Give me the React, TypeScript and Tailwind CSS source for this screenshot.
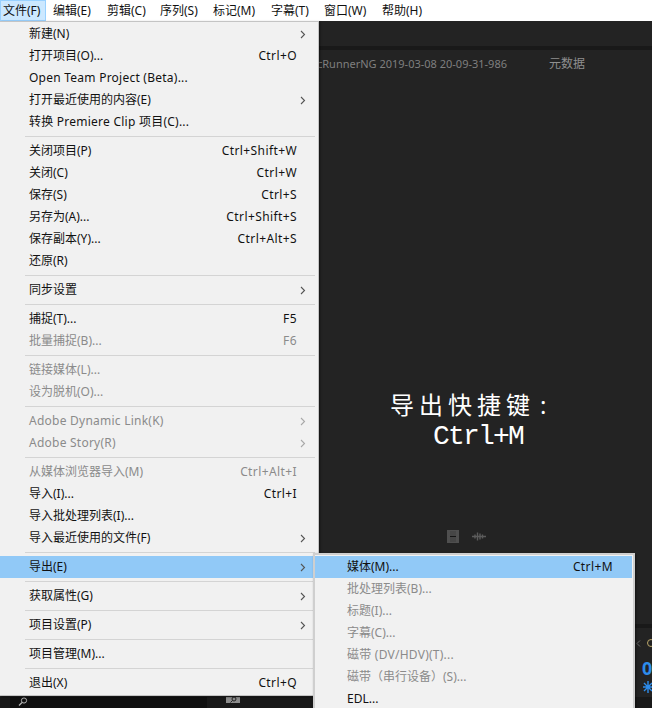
import React from "react";

const FONT = "[font-family:'Noto_Sans','Noto_Sans_CJK_SC',sans-serif]";

type Row = { t?: string; k?: string; arrow?: boolean; off?: boolean; hi?: boolean; sep?: boolean; ls?: boolean };

const mainMenu: Row[] = [
  { t: "新建(N)", arrow: true },
  { t: "打开项目(O)...", k: "Ctrl+O" },
  { t: "Open Team Project (Beta)...", ls: true },
  { t: "打开最近使用的内容(E)", arrow: true },
  { t: "转换 Premiere Clip 项目(C)...", ls: true },
  { sep: true },
  { t: "关闭项目(P)", k: "Ctrl+Shift+W" },
  { t: "关闭(C)", k: "Ctrl+W" },
  { t: "保存(S)", k: "Ctrl+S" },
  { t: "另存为(A)...", k: "Ctrl+Shift+S" },
  { t: "保存副本(Y)...", k: "Ctrl+Alt+S" },
  { t: "还原(R)" },
  { sep: true },
  { t: "同步设置", arrow: true },
  { sep: true },
  { t: "捕捉(T)...", k: "F5" },
  { t: "批量捕捉(B)...", k: "F6", off: true },
  { sep: true },
  { t: "链接媒体(L)...", off: true },
  { t: "设为脱机(O)...", off: true },
  { sep: true },
  { t: "Adobe Dynamic Link(K)", arrow: true, off: true, ls: true },
  { t: "Adobe Story(R)", arrow: true, off: true, ls: true },
  { sep: true },
  { t: "从媒体浏览器导入(M)", k: "Ctrl+Alt+I", off: true },
  { t: "导入(I)...", k: "Ctrl+I" },
  { t: "导入批处理列表(I)..." },
  { t: "导入最近使用的文件(F)", arrow: true },
  { sep: true },
  { t: "导出(E)", arrow: true, hi: true },
  { sep: true },
  { t: "获取属性(G)", arrow: true },
  { sep: true },
  { t: "项目设置(P)", arrow: true },
  { sep: true },
  { t: "项目管理(M)..." },
  { sep: true },
  { t: "退出(X)", k: "Ctrl+Q" },
];

const subMenu: Row[] = [
  { t: "媒体(M)...", k: "Ctrl+M", hi: true },
  { t: "批处理列表(B)...", off: true },
  { t: "标题(I)...", off: true },
  { t: "字幕(C)...", off: true },
  { t: "磁带 (DV/HDV)(T)...", off: true, ls: true },
  { t: "磁带（串行设备）(S)...", off: true },
  { t: "EDL..." },
];

const bar = [
  { t: "文件(F)", c: "w-[46px] border border-[#99d1ff] bg-[#cce8ff] pl-[2px] mr-[7px]" },
  { t: "编辑(E)", c: "w-[54px]" },
  { t: "剪辑(C)", c: "w-[53px]" },
  { t: "序列(S)", c: "w-[53px]" },
  { t: "标记(M)", c: "w-[58px]" },
  { t: "字幕(T)", c: "w-[53px]" },
  { t: "窗口(W)", c: "w-[58px]" },
  { t: "帮助(H)", c: "w-[58px]" },
];

function Chevron({ off }: { off?: boolean }) {
  return (
    <svg width="6" height="9" viewBox="0 0 6 9" className="shrink-0">
      <path d="M1 1l3.5 3.5L1 8" fill="none" stroke={off ? "#a8a8a8" : "#555555"} strokeWidth="1.1" />
    </svg>
  );
}

function MainItem({ r }: { r: Row }) {
  if (r.sep) {
    return (
      <div className="h-[7px] pl-[25px] pr-[3px] pt-[3px]">
        <div className="h-px bg-[#d4d4d4]" />
      </div>
    );
  }
  return (
    <div
      className={`flex h-[22px] items-center pl-[29px] pr-[12px] ${r.hi ? "bg-[#91c9f7]" : ""} ${
        r.off ? "text-[#8b8b8b]" : "text-[#111111]"
      }`}
    >
      <span className={`flex-1 whitespace-nowrap ${r.ls ? "tracking-[0.24px]" : ""}`}>{r.t}</span>
      {r.k && <span className="mr-[9px] whitespace-nowrap tracking-[0.4px]">{r.k}</span>}
      {r.arrow && <Chevron off={r.off} />}
    </div>
  );
}

function SubItem({ r }: { r: Row }) {
  return (
    <div
      className={`flex h-[22px] items-center pl-[32px] pr-[19px] ${r.hi ? "bg-[#91c9f7]" : ""} ${
        r.off ? "text-[#8b8b8b]" : "text-[#111111]"
      }`}
    >
      <span className={`flex-1 whitespace-nowrap ${r.ls ? "tracking-[0.24px]" : ""}`}>{r.t}</span>
      {r.k && <span className="whitespace-nowrap tracking-[0.4px]">{r.k}</span>}
    </div>
  );
}

export default function App() {
  return (
    <div className={`relative flex h-[708px] w-[652px] flex-col overflow-hidden bg-[#232323] text-[12px] ${FONT}`}>
      {/* menu bar */}
      <div className="flex h-[21px] shrink-0 items-center bg-white text-[#111111]">
        {bar.map((b) => (
          <div key={b.t} className={`flex h-[21px] shrink-0 items-center whitespace-nowrap pt-px ${b.c}`}>
            {b.t}
          </div>
        ))}
      </div>

      <div className="h-[25px] shrink-0 bg-[#232323]" />
      <div className="h-[4px] shrink-0 bg-[#191919]" />

      {/* tab row */}
      <div className="flex h-[28px] shrink-0 items-center justify-end pr-[67px] text-[#7f7f7f]">
        <span className="whitespace-nowrap text-[11px]">MacRunnerNG 2019-03-08 20-09-31-986</span>
        <span className="ml-[42px] whitespace-nowrap text-[#8f8f8f]">元数据</span>
      </div>

      {/* monitor */}
      <div className="min-h-0 flex-1 pl-[390px] pt-[312px] text-white">
        <div className="h-[30px] whitespace-nowrap text-[24px] leading-[30px] tracking-[5px]">
          导出快捷键<span className="ml-[5px]">:</span>
        </div>
        <div className="ml-[43px] mt-[2px] h-[30px] whitespace-nowrap text-[28px] leading-[30px] tracking-[-1.8px] [font-family:'Liberation_Mono',monospace]">
          Ctrl+M
        </div>
        <div className="ml-[57px] mt-[78px] flex items-center gap-[13px]">
          <svg width="12" height="13" viewBox="0 0 12 13">
            <rect width="12" height="13" fill="#4f4f4f" />
            <rect x="3" y="1" width="6" height="11" fill="#464646" />
            <rect x="3" y="6" width="6" height="1" fill="#151515" />
          </svg>
          <svg width="14" height="9" viewBox="0 0 14 9">
            <path d="M0 4.5h14M3 2.5v4M5.5 0.5v8M8 1.5v6M10.5 2.5v4" stroke="#5b5b5b" strokeWidth="1.4" fill="none" />
          </svg>
        </div>
      </div>

      <div className="h-[4px] shrink-0 bg-[#191919]" />

      {/* lower panel */}
      <div className="flex h-[69px] shrink-0 justify-end bg-[#232323]">
        <div className="flex w-[16px] flex-col overflow-hidden">
          <div className="flex h-[28px] items-center gap-[6px] pt-[2px]">
            <svg width="5" height="7" viewBox="0 0 5 7" className="shrink-0">
              <path d="M4 0.5L1 3.5l3 3" fill="none" stroke="#6a6a6a" strokeWidth="1" />
            </svg>
            <div className="h-[8px] w-[8px] shrink-0 rounded-full border border-[#b9a66a]" />
          </div>
          <div className="h-[24px] pl-[6px] text-[18px] font-bold leading-[24px] text-[#2d8ceb]">0</div>
          <svg width="10" height="14" viewBox="0 0 10 14" className="ml-[7px] shrink-0">
            <path d="M5 1v12M0 7h10M1 3l8 8M9 3l-8 8" stroke="#2d8ceb" strokeWidth="1.4" fill="none" />
          </svg>
        </div>
      </div>

      {/* bottom strip */}
      <div className="flex h-[11px] shrink-0 bg-[#191919]">
        <div className="ml-[10px] flex h-full w-[197px] items-start bg-[#101010] pl-[8px]">
          <svg width="10" height="10" viewBox="0 0 10 10">
            <circle cx="6" cy="3.5" r="2.6" fill="none" stroke="#b5b5b5" strokeWidth="1" />
            <path d="M4 5.5L1 8.5" stroke="#b5b5b5" strokeWidth="1.2" />
          </svg>
        </div>
        <div className="ml-[19px] flex h-[6px] w-[14px] items-center justify-center bg-[#8d8d8d]">
          <svg width="8" height="6" viewBox="0 0 8 6">
            <circle cx="5" cy="2" r="2" fill="none" stroke="#222222" strokeWidth="1" />
            <path d="M3.5 3.5L1.5 5.5" stroke="#222222" strokeWidth="1" />
          </svg>
        </div>
      </div>

      {/* file menu */}
      <div className="absolute left-0 top-[21px] w-[319px] border-b border-r border-t border-[#c4c4c4] bg-[#f1f1f1] pb-[1px] shadow-[1px_1px_2px_rgba(0,0,0,0.5)]">
        <div className="pt-[1px]" />
        {mainMenu.map((r, i) => (
          <MainItem key={i} r={r} />
        ))}
      </div>

      {/* export submenu */}
      <div className="absolute left-[313px] top-[553px] h-[170px] w-[322px] border-2 border-[#cfcfcf] bg-[#f1f1f1] pr-[1px] pt-[1px] shadow-[1px_1px_2px_rgba(0,0,0,0.5)]">
        {subMenu.map((r, i) => (
          <SubItem key={i} r={r} />
        ))}
      </div>
    </div>
  );
}
